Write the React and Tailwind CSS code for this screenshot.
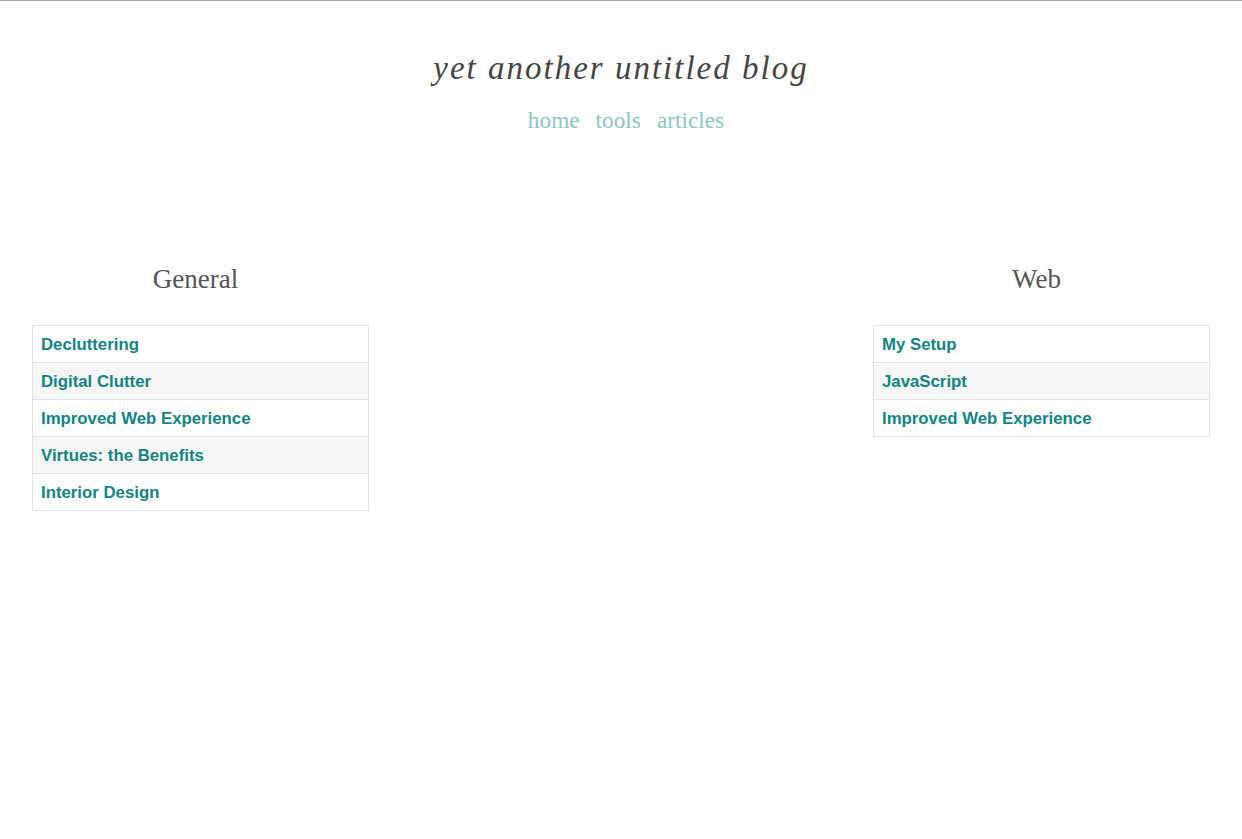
import React from "react";

const general = [
  "Decluttering",
  "Digital Clutter",
  "Improved Web Experience",
  "Virtues: the Benefits",
  "Interior Design",
];

const web = ["My Setup", "JavaScript", "Improved Web Experience"];

const Category = ({ title, items }) => {
  return (
    <div className="w-[337px]">
      <h2 className="text-center text-[27px] leading-none text-[#555] pr-[10px] font-['Liberation_Serif',serif]">
        {title}
      </h2>
      <ul className="mt-[32px] border-x border-b border-[#e3e3e3]">
        {items.map((item, i) => (
          <li
            key={i}
            className={`h-[37px] flex items-center px-2 border-t border-[#e3e3e3] ${
              i % 2 === 1 ? "bg-[#f7f7f7]" : "bg-white"
            }`}
          >
            <a className="text-[16.8px] font-bold text-[#118584] font-['Liberation_Sans',Arial,sans-serif]">
              {item}
            </a>
          </li>
        ))}
      </ul>
    </div>
  );
};

const App = () => {
  return (
    <div className="min-h-screen bg-white border-t border-[#aaa]">
      {/* Header */}
      <header className="text-center pt-[51px]">
        <h1 className="text-[33px] leading-none italic tracking-[2px] text-[#444] font-['Liberation_Serif',serif]">
          yet another untitled blog
        </h1>
        <nav className="mt-[24px] pl-[10px] flex justify-center gap-[16px] text-[23.3px] leading-none text-[#8cc6c5] font-['Liberation_Serif',serif]">
          <a>home</a>
          <a>tools</a>
          <a>articles</a>
        </nav>
      </header>

      {/* Categories */}
      <div className="flex justify-between items-start px-8 mt-[134px]">
        <Category title="General" items={general} />
        <Category title="Web" items={web} />
      </div>
    </div>
  );
};

export default App;
